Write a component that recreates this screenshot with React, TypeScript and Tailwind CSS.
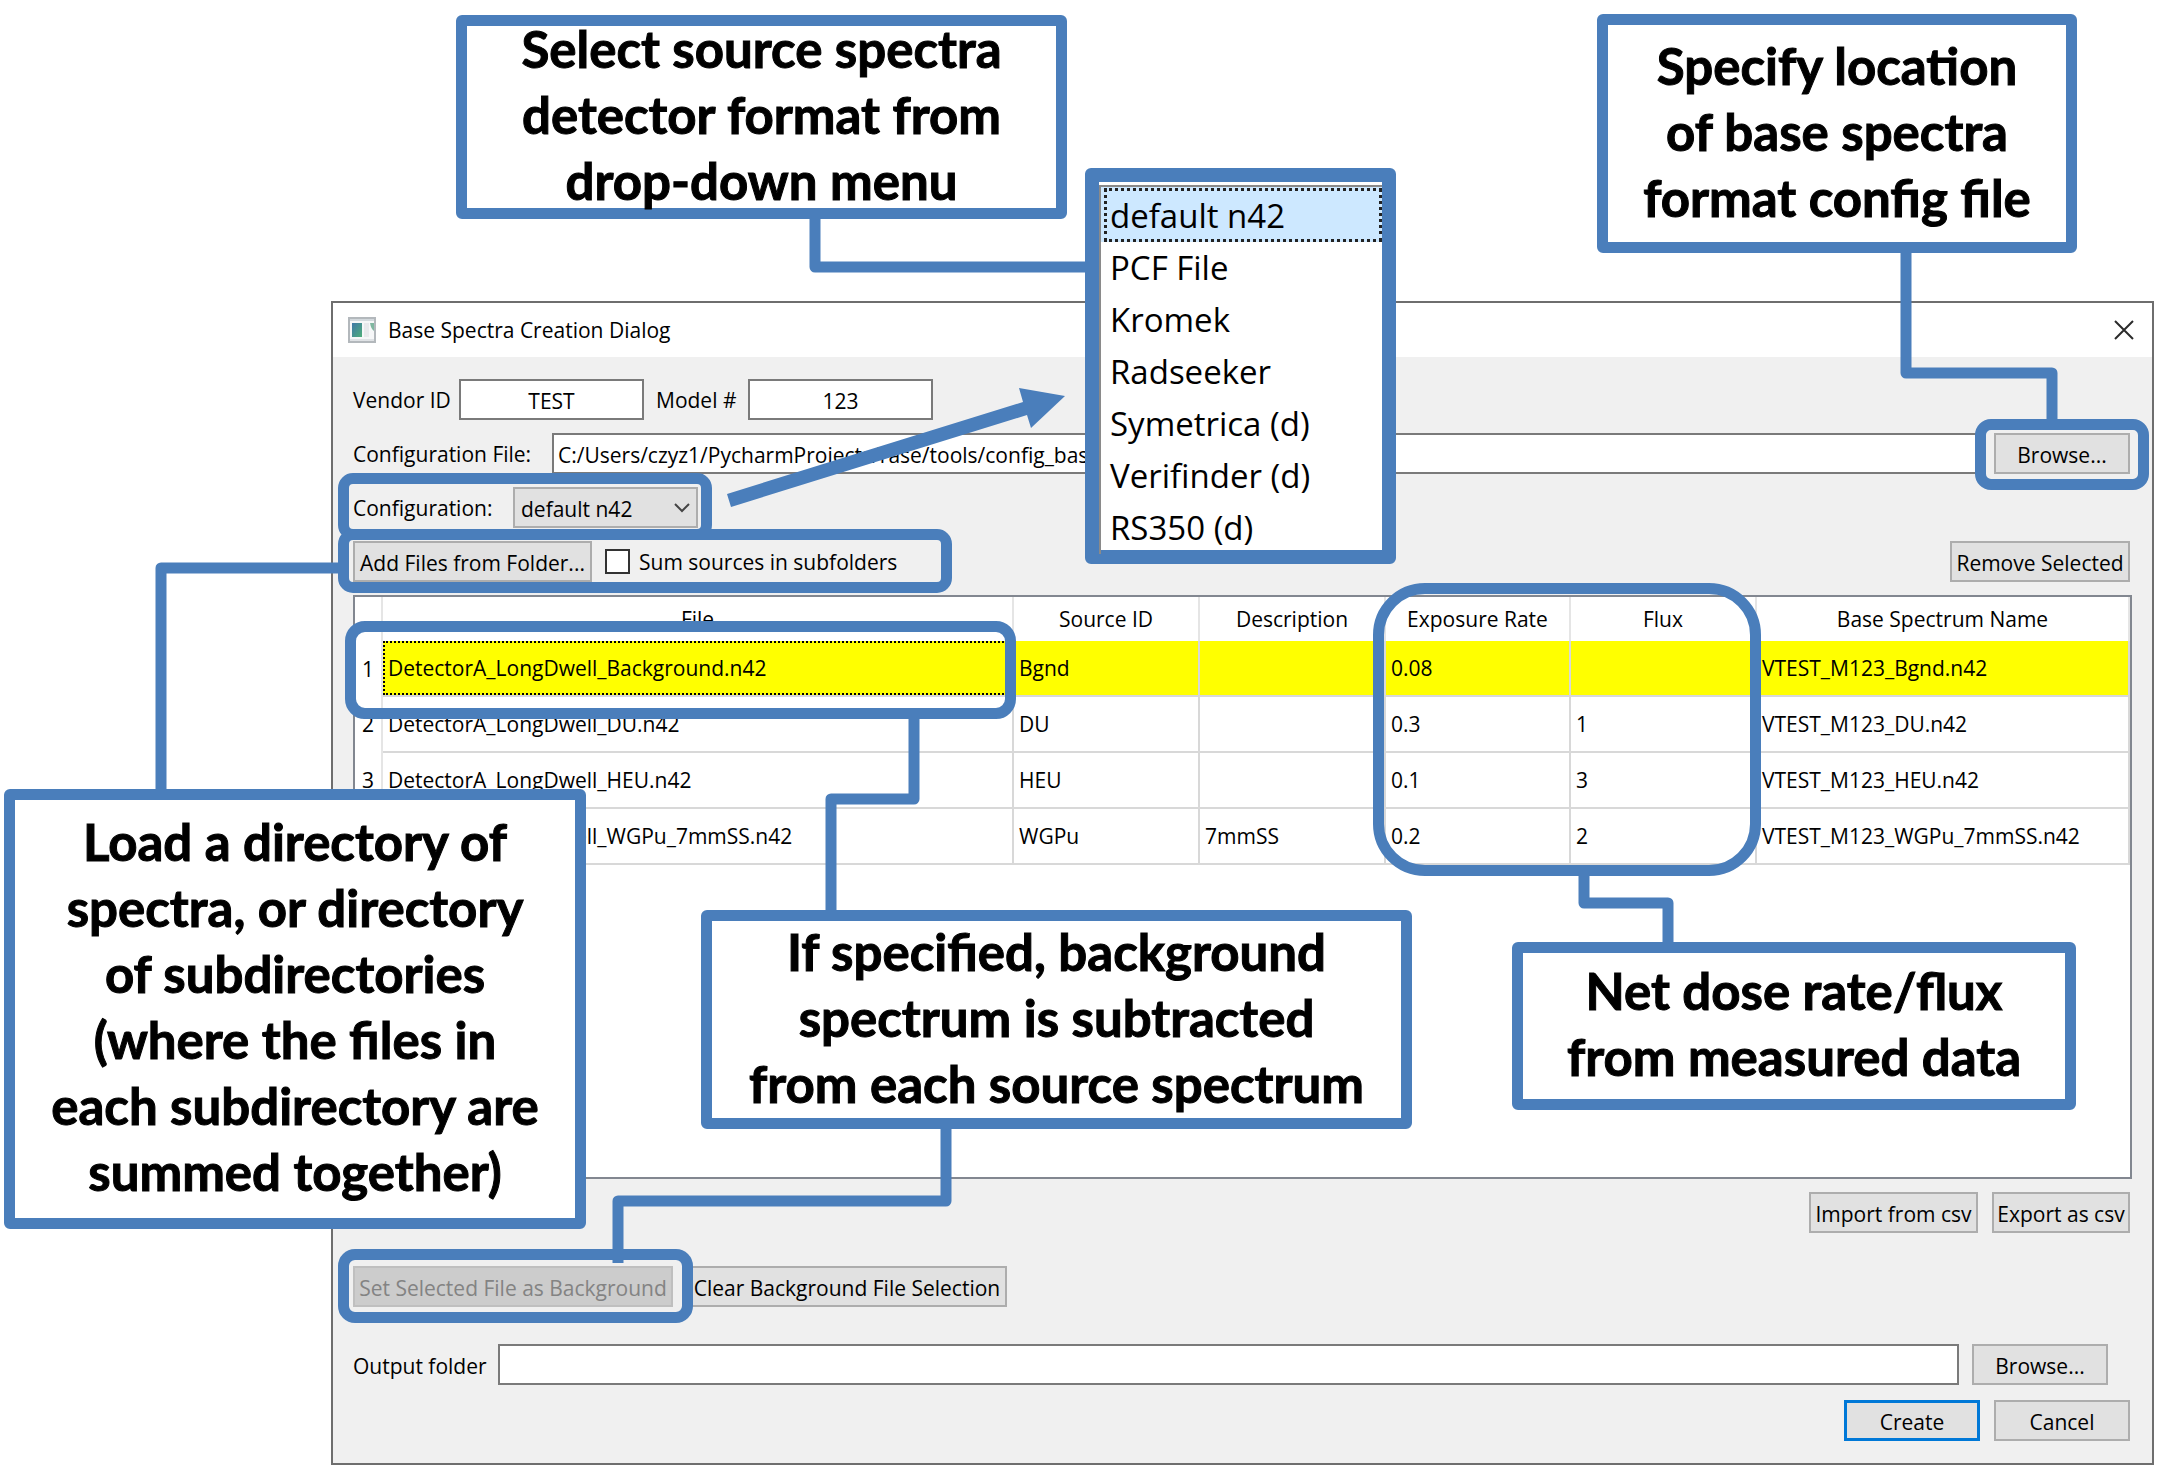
import React from "react";

type Row = {
  file: string;
  source: string;
  description: string;
  rate: string;
  flux: string;
  name: string;
};

const rows: Row[] = [
  { file: "DetectorA_LongDwell_Background.n42", source: "Bgnd", description: "", rate: "0.08", flux: "", name: "VTEST_M123_Bgnd.n42" },
  { file: "DetectorA_LongDwell_DU.n42", source: "DU", description: "", rate: "0.3", flux: "1", name: "VTEST_M123_DU.n42" },
  { file: "DetectorA_LongDwell_HEU.n42", source: "HEU", description: "", rate: "0.1", flux: "3", name: "VTEST_M123_HEU.n42" },
  { file: "DetectorA_LongDwell_WGPu_7mmSS.n42", source: "WGPu", description: "7mmSS", rate: "0.2", flux: "2", name: "VTEST_M123_WGPu_7mmSS.n42" },
];

const formats = ["default n42", "PCF File", "Kromek", "Radseeker", "Symetrica (d)", "Verifinder (d)", "RS350 (d)"];

const columns = ["File", "Source ID", "Description", "Exposure Rate", "Flux", "Base Spectrum Name"];

function Button({ children, className = "", disabled = false }: { children: React.ReactNode; className?: string; disabled?: boolean }) {
  const tone = disabled ? "border-2 border-[#bfbfbf] bg-[#cccccc] text-[#838383]" : "bg-[#e1e1e1] text-black";
  return (
    <button type="button" disabled={disabled} className={`flex h-[41px] shrink-0 items-center justify-center pt-0.5 whitespace-nowrap ${tone} ${className}`}>
      {children}
    </button>
  );
}

function Callout({ lines, className }: { lines: string[]; className: string }) {
  return (
    <div className={`absolute flex flex-col items-center justify-center rounded-md border-[11px] border-[#4a7ebb] bg-white pb-1 text-center font-['Lato',sans-serif] text-[51px] leading-[66px] font-bold whitespace-nowrap text-black [-webkit-text-stroke:1px_black] ${className}`}>
      {lines.map((line) => (
        <span key={line}>{line}</span>
      ))}
    </div>
  );
}

function Highlight({ className }: { className: string }) {
  return <div className={`absolute border-[11px] border-[#4a7ebb] ${className}`} />;
}

function WindowIcon() {
  return (
    <svg width="28" height="26" viewBox="0 0 28 26" aria-hidden="true">
      <defs>
        <linearGradient id="pane" x1="0" y1="0" x2="1" y2="1">
          <stop offset="0" stopColor="#3f78a8" />
          <stop offset="1" stopColor="#4fae7a" />
        </linearGradient>
      </defs>
      <rect x="1" y="1" width="26" height="24" fill="#f6f7f8" stroke="#b3b8bc" strokeWidth="2" />
      <rect x="2" y="2" width="24" height="2" fill="#d3d9dd" />
      <rect x="4" y="6" width="10" height="14" fill="url(#pane)" />
      <rect x="16" y="6" width="5" height="14" fill="#e8e9ec" />
      <path d="M22 6h4v8q-3-2-4-8" fill="#7fb7a0" />
      <rect x="2" y="22" width="24" height="2" fill="#dfe2e5" />
    </svg>
  );
}

function FileTable() {
  return (
    <div className="h-[584px] border-2 border-[#828790] bg-white">
      <table className="w-full table-fixed border-collapse text-left">
        <colgroup>
          <col className="w-[27px]" />
          <col className="w-[631px]" />
          <col className="w-[186px]" />
          <col className="w-[186px]" />
          <col className="w-[185px]" />
          <col className="w-[186px]" />
          <col />
        </colgroup>
        <thead>
          <tr className="h-[44px]">
            <th className="border-r-2 border-[#e5e5e5]" />
            {columns.map((c) => (
              <th key={c} scope="col" className="border-r-2 border-[#e5e5e5] p-0 text-center font-normal">
                {c}
              </th>
            ))}
          </tr>
        </thead>
        <tbody>
          {rows.map((r, i) => (
            <tr key={r.file}>
              <th scope="row" className="border-r-2 border-[#e5e5e5] p-0 text-center font-normal">
                {i + 1}
              </th>
              {[r.file, r.source, r.description, r.rate, r.flux, r.name].map((v, j) => (
                <td key={j} className={`border-r-2 border-b-2 border-[#d8d8d8] p-0 ${i === 0 ? "bg-[#ffff00]" : ""}`}>
                  <div className={`flex h-[54px] items-center whitespace-nowrap ${i === 0 && j === 0 ? "border-2 border-dotted border-black pl-[3px]" : "pl-[5px]"}`}>{v}</div>
                </td>
              ))}
            </tr>
          ))}
        </tbody>
      </table>
    </div>
  );
}

function Dialog() {
  return (
    <section aria-label="Base Spectra Creation Dialog" className="mr-1 ml-[331px] border-2 border-[#6e6e6e] bg-[#f0f0f0]">
      <header className="flex h-[54px] items-center gap-3 bg-white pr-[18px] pl-[15px]">
        <WindowIcon />
        <h1 className="grow">Base Spectra Creation Dialog</h1>
        <button type="button" aria-label="Close">
          <svg width="20" height="20" viewBox="0 0 20 20" fill="none" stroke="#2b2b2b" strokeWidth="2" aria-hidden="true">
            <path d="M1 1 19 19M19 1 1 19" />
          </svg>
        </button>
      </header>

      <form className="flex flex-col gap-[13px] pt-[22px] pr-[20px] pb-[22px] pl-[20px]" onSubmit={(e) => e.preventDefault()}>
        <div className="flex items-center">
          <label htmlFor="vendor" className="w-[106px]">Vendor ID</label>
          <input id="vendor" defaultValue="TEST" className="h-[41px] w-[185px] border-2 border-[#7a7a7a] bg-white pt-0.5 text-center" />
          <label htmlFor="model" className="ml-3 w-[92px]">Model #</label>
          <input id="model" defaultValue="123" className="h-[41px] w-[185px] border-2 border-[#7a7a7a] bg-white pt-0.5 text-center" />
        </div>

        <div className="flex items-center">
          <label htmlFor="config-file" className="w-[199px]">Configuration File:</label>
          <input id="config-file" defaultValue="C:/Users/czyz1/PycharmProjects/rase/tools/config_base" className="h-[41px] min-w-0 grow border-2 border-[#7a7a7a] bg-white px-1 pt-0.5" />
          <Button className="mr-0.5 ml-[13px] w-[136px] border-2 border-[#adadad]">Browse...</Button>
        </div>

        <div className="flex items-center">
          <label htmlFor="configuration" className="w-[160px]">Configuration:</label>
          <div className="relative">
            <select id="configuration" defaultValue={formats[0]} className="block h-[41px] w-[185px] appearance-none border-2 border-[#adadad] bg-[#e1e1e1] pt-0.5 pl-1.5">
              {formats.map((f) => (
                <option key={f}>{f}</option>
              ))}
            </select>
            <svg className="pointer-events-none absolute top-4 right-2" width="16" height="10" viewBox="0 0 16 10" fill="none" stroke="#444" strokeWidth="2" aria-hidden="true">
              <path d="M1 1 8 8 15 1" />
            </svg>
          </div>
        </div>

        <div className="flex items-center">
          <Button className="w-[239px] border-2 border-[#adadad]">Add Files from Folder...</Button>
          <input id="sum" type="checkbox" className="ml-[13px] size-[25px] appearance-none border-2 border-[#333333] bg-white" />
          <label htmlFor="sum" className="ml-[9px] grow">Sum sources in subfolders</label>
          <Button className="mr-0.5 w-[180px] border-2 border-[#adadad]">Remove Selected</Button>
        </div>

        <FileTable />

        <div className="mr-0.5 flex justify-end gap-[14px]">
          <Button className="w-[169px] border-2 border-[#adadad]">Import from csv</Button>
          <Button className="w-[138px] border-2 border-[#adadad]">Export as csv</Button>
        </div>

        <div className="mt-5 flex gap-[14px]">
          <Button disabled className="w-[320px]">Set Selected File as Background</Button>
          <Button className="w-[320px] border-2 border-[#adadad]">Clear Background File Selection</Button>
        </div>

        <div className="mt-6 flex items-center pr-[24px]">
          <label htmlFor="output" className="w-[145px] pt-0.5">Output folder</label>
          <input id="output" className="h-[41px] min-w-0 grow border-2 border-[#7a7a7a] bg-white px-1" />
          <Button className="ml-[13px] w-[136px] border-2 border-[#adadad]">Browse...</Button>
        </div>

        <div className="mt-0.5 mr-0.5 flex justify-end gap-[14px]">
          <Button className="w-[136px] border-[3px] border-[#0078d7]">Create</Button>
          <Button className="w-[136px] border-2 border-[#adadad]">Cancel</Button>
        </div>
      </form>
    </section>
  );
}

function Annotations() {
  return (
    <div className="pointer-events-none absolute inset-0">
      <Highlight className="top-[473px] left-[338px] h-[67px] w-[374px] rounded-[15px]" />
      <Highlight className="top-[529px] left-[338px] h-[64px] w-[614px] rounded-[15px]" />
      <Highlight className="top-[419px] right-[9px] h-[71px] w-[174px] rounded-[16px]" />
      <Highlight className="top-[621px] left-[345px] h-[98px] w-[671px] rounded-[20px]" />
      <Highlight className="top-[583px] right-[397px] h-[293px] w-[388px] rounded-[52px]" />
      <Highlight className="top-[1249px] left-[338px] h-[74px] w-[355px] rounded-[17px]" />

      <svg className="absolute top-0 right-0" width="2158" height="1466" viewBox="0 0 2158 1466" fill="none" stroke="#4a7ebb" strokeWidth="11" strokeLinejoin="round" aria-hidden="true">
        <path d="M815 215V267H1090" />
        <path d="M1906 248V373H2052V424" />
        <path d="M342 568H161V794" />
        <path d="M914 714V799H831V910" />
        <path d="M946 1124V1201H618V1263" />
        <path d="M1584 870V903H1668V946" />
        <path d="M727 494 1023 402 1019 388 1065 396 1031 428 1027 415 731 507Z" fill="#4a7ebb" stroke="none" />
      </svg>

      <Callout className="top-[15px] left-[456px] h-[204px] w-[611px]" lines={["Select source spectra", "detector format from", "drop-down menu"]} />
      <Callout className="top-[14px] right-[81px] h-[239px] w-[480px]" lines={["Specify location", "of base spectra", "format config file"]} />
      <Callout
        className="top-[789px] left-[4px] h-[440px] w-[582px]"
        lines={["Load a directory of", "spectra, or directory", "of subdirectories", "(where the files in", "each subdirectory are", "summed together)"]}
      />
      <Callout className="top-[910px] left-[701px] h-[219px] w-[711px]" lines={["If specified, background", "spectrum is subtracted", "from each source spectrum"]} />
      <Callout className="top-[942px] right-[82px] h-[168px] w-[564px]" lines={["Net dose rate/flux", "from measured data"]} />

      <ul className="absolute top-[168px] left-[1085px] h-[396px] w-[311px] rounded-md border-[14px] border-[#4a7ebb] bg-white pt-[3px] text-[33px] leading-[52px]">
        {formats.map((f, i) => (
          <li key={f} className={i === 0 ? "border-t-2 border-l-2 border-[#8a8a8a] bg-[#cde8ff] pt-px pl-[3px]" : "border-l-2 border-[#8a8a8a] pl-[9px]"}>
            {i === 0 ? <div className="border-[3px] border-dotted border-[#222] pt-0.5 pl-[3px] leading-[46px]">{f}</div> : f}
          </li>
        ))}
      </ul>
    </div>
  );
}

export default function App() {
  return (
    <main className="relative min-h-screen overflow-hidden bg-white pt-[301px] font-['Open_Sans','Noto_Sans',sans-serif] text-[21px] leading-7 text-black">
      <Dialog />
      <Annotations />
    </main>
  );
}
